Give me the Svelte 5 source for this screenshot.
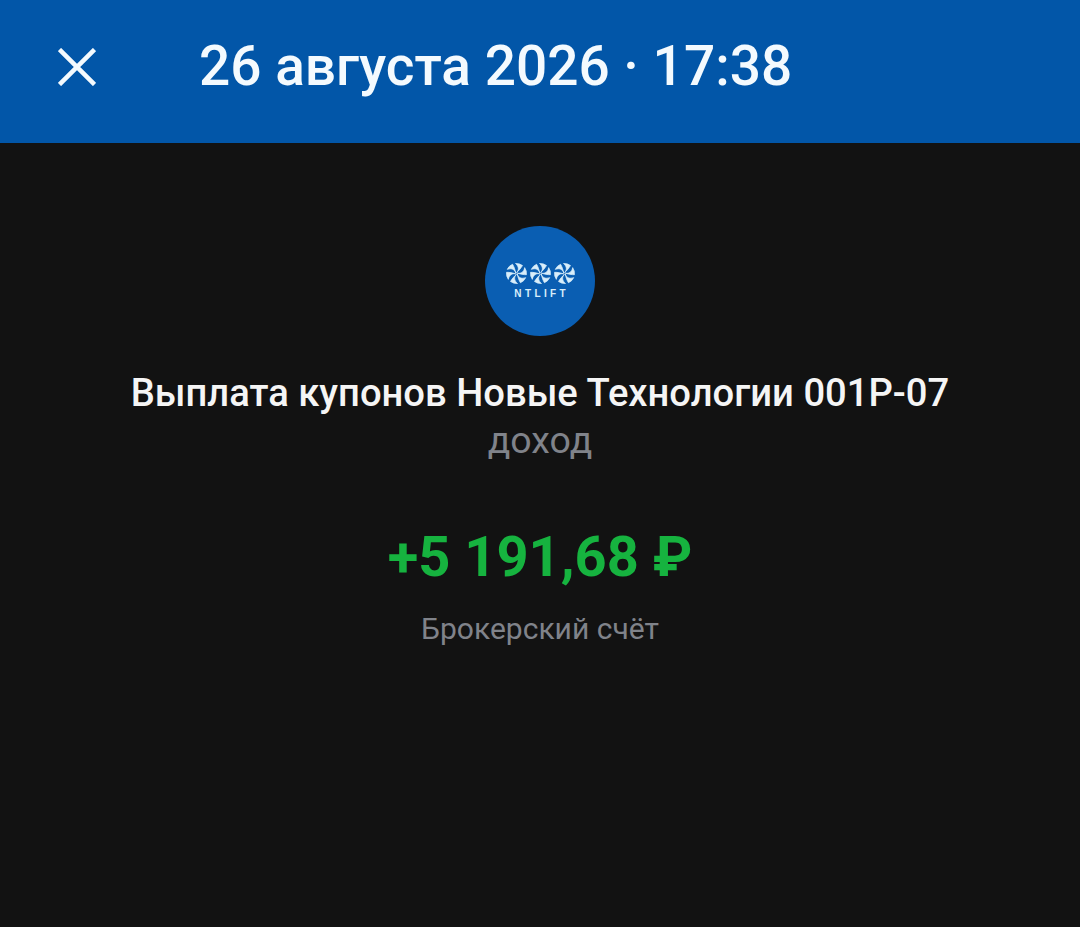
<script>
  // curved blades of the logo pinwheel
  const blades = [0, 60, 120, 180, 240, 300];
  const wheels = [0, 1, 2];
</script>

<div class="screen">
  <header class="topbar">
    <svg class="close" viewBox="0 0 38 38" aria-hidden="true">
      <path d="M1.5 1.5 L36.5 36.5 M36.5 1.5 L1.5 36.5" />
    </svg>
    <h1 class="date">26 августа 2026 · 17:38</h1>
  </header>

  <main class="content">
    <div class="logo">
      <div class="wheels">
        {#each wheels as w}
          <svg class="wheel" viewBox="-10.5 -10.5 21 21" aria-hidden="true">
            {#each blades as angle}
              <path d="M0 -0.8 C2.6 -3.5 2.6 -7 -1 -10 A10 10 0 0 1 6 -8 C4.6 -5.5 2.6 -3.2 0 -0.8 Z" transform="rotate({angle})" />
            {/each}
          </svg>
        {/each}
      </div>
      <span class="brand">NTLIFT</span>
    </div>

    <div class="title">Выплата купонов Новые Технологии 001Р-07</div>
    <div class="kind">доход</div>
    <div class="amount">+5 191,68 ₽</div>
    <div class="account">Брокерский счёт</div>
  </main>
</div>

<style>
  :global(body) {
    margin: 0;
    background: #121212;
  }

  .screen {
    height: 927px;
    background: #121212;
    font-family: Roboto, "Noto Sans", sans-serif;
    overflow: hidden;
  }

  .topbar {
    height: 143px;
    background: #0256a8;
    display: flex;
    align-items: center;
    padding: 0 0 11px 58px;
    box-sizing: border-box;
  }

  .close {
    width: 38px;
    height: 38px;
    flex: none;
    margin-top: 1px;
  }

  .close path {
    stroke: #f4fafe;
    stroke-width: 4.5;
    fill: none;
  }

  .date {
    margin: 0 0 0 103px;
    font-size: 55px;
    font-weight: 500;
    color: #f4fafe;
    white-space: nowrap;
  }

  .content {
    display: flex;
    flex-direction: column;
    align-items: center;
    padding-top: 83px;
  }

  .logo {
    width: 110px;
    height: 110px;
    border-radius: 50%;
    background: #0a5eb2;
    display: flex;
    flex-direction: column;
    align-items: center;
    justify-content: center;
    gap: 5px;
  }

  .wheels {
    display: flex;
    gap: 3px;
  }

  .wheel {
    width: 21px;
    height: 21px;
  }

  .wheel path {
    fill: #d9eefa;
    stroke: #d9eefa;
    stroke-width: 0.7;
  }

  .brand {
    font-family: "Liberation Sans", sans-serif;
    font-size: 10px;
    font-weight: 700;
    letter-spacing: 3.4px;
    margin-right: -3.4px;
    color: #d9eefa;
    line-height: 10px;
  }

  .title {
    margin-top: 36px;
    font-size: 38.2px;
    font-weight: 500;
    line-height: 42px;
    color: #f5f5f5;
    white-space: nowrap;
  }

  .kind {
    margin-top: 5px;
    font-size: 37.5px;
    line-height: 42px;
    color: #80838a;
  }

  .amount {
    margin-top: 64px;
    font-size: 56px;
    font-weight: 700;
    line-height: 64px;
    color: #16b33f;
    white-space: nowrap;
  }

  .account {
    margin-top: 22px;
    font-size: 30px;
    line-height: 36px;
    color: #80838a;
  }
</style>
